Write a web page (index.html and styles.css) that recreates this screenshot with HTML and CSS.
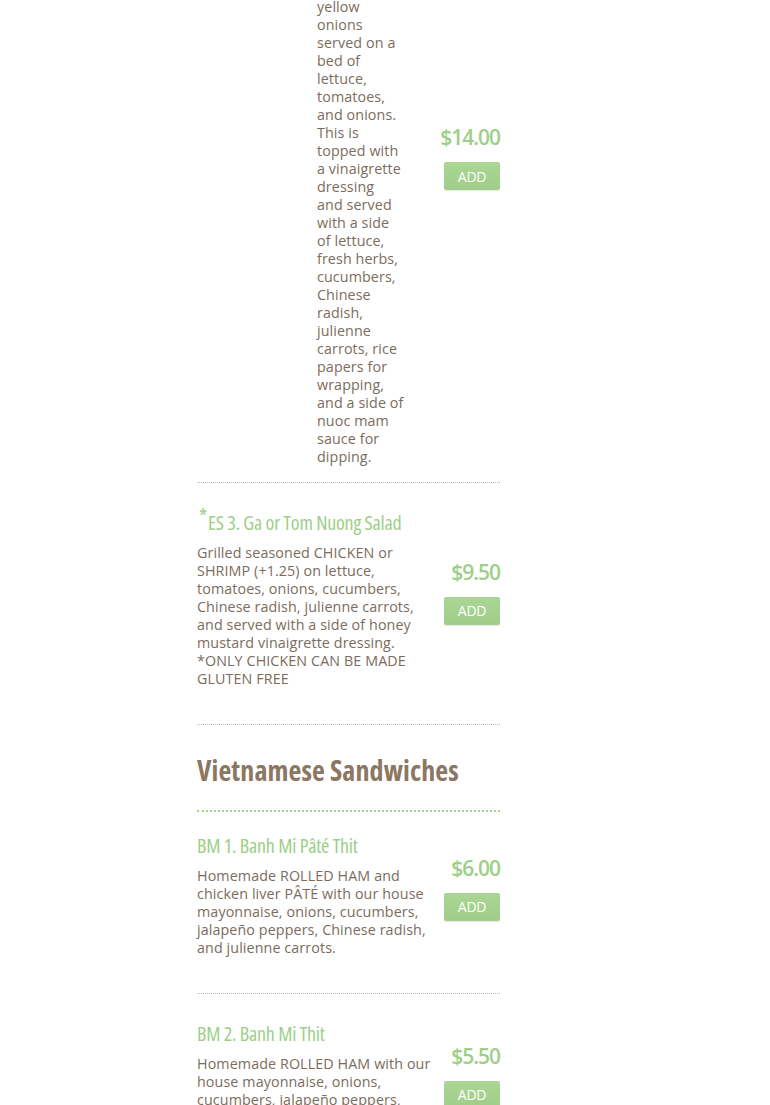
FILE: index.html
```html
<!DOCTYPE html>
<html lang="en">
<head>
<meta charset="utf-8">
<title>Menu</title>
<link rel="stylesheet" href="styles.css">
</head>
<body>
<div class="menu">
  <div class="item item--first">
    <div class="photo"></div>
    <p class="desc desc--narrow">yellow onions served on a bed of lettuce, tomatoes, and onions. This is topped with a vinaigrette dressing<br>and served with a side of lettuce, fresh herbs, cucumbers, Chinese radish, julienne carrots, rice papers for wrapping, and a side of nuoc mam sauce for dipping.</p>
    <div class="side">
      <div class="price">$14.00</div>
      <button class="add">ADD</button>
    </div>
  </div>

  <div class="item item--tail">
    <div class="content">
      <h3 class="title"><span class="star">*</span>ES 3. Ga or Tom Nuong Salad</h3>
      <p class="desc">Grilled seasoned CHICKEN or SHRIMP (+1.25) on lettuce, tomatoes, onions, cucumbers, Chinese radish, julienne carrots, and served with a side of honey mustard vinaigrette dressing. *ONLY CHICKEN CAN BE MADE GLUTEN FREE</p>
    </div>
    <div class="side">
      <div class="price">$9.50</div>
      <button class="add">ADD</button>
    </div>
  </div>

  <h2 class="section">Vietnamese Sandwiches</h2>

  <div class="item item--tail">
    <div class="content">
      <h3 class="title">BM 1. Banh Mi Pâté Thit</h3>
      <p class="desc">Homemade ROLLED HAM and chicken liver PÂTÉ with our house mayonnaise, onions, cucumbers, jalapeño peppers, Chinese radish, and julienne carrots.</p>
    </div>
    <div class="side">
      <div class="price">$6.00</div>
      <button class="add">ADD</button>
    </div>
  </div>

  <div class="item item--tail">
    <div class="content">
      <h3 class="title">BM 2. Banh Mi Thit</h3>
      <p class="desc">Homemade ROLLED HAM with our house mayonnaise, onions, cucumbers, jalapeño peppers, Chinese radish, and julienne carrots.</p>
    </div>
    <div class="side">
      <div class="price">$5.50</div>
      <button class="add">ADD</button>
    </div>
  </div>
</div>
</body>
</html>
```

FILE: styles.css
```css
html, body {
  margin: 0;
  padding: 0;
  background: #fff;
}

body {
  font-family: "Open Sans", "Liberation Sans", sans-serif;
  font-size: 14.3px;
  line-height: 18px;
  letter-spacing: 0.1px;
  color: #7b6c5d;
  overflow: hidden;
}

.menu {
  width: 303px;
  margin: -2px 0 0 197px;
}

.item {
  display: flex;
  align-items: center;
  gap: 4px;
  padding: 25px 0 36px;
  border-bottom: 1px dotted #b9b9b9;
}

.item--first {
  align-items: flex-start;
  gap: 0;
  padding: 0 0 16px;
}

.photo {
  width: 120px;
  flex: none;
}

.content {
  flex: 1;
  min-width: 0;
}

.title {
  margin: 0 0 6px;
  font-family: "Open Sans", "Liberation Sans Narrow", sans-serif;
  font-stretch: 75%;
  font-weight: 400;
  font-size: 20px;
  line-height: 30px;
  color: #9ccf88;
  letter-spacing: -0.2px;
}

.star {
  display: inline-block;
  font-size: 21px;
  line-height: 14px;
  vertical-align: 6px;
  margin: 0 1px 0 2px;
}

.desc {
  margin: 0;
}

.desc--narrow {
  width: 88px;
  flex: none;
}

.side {
  width: 60px;
  flex: none;
  margin-left: auto;
  display: flex;
  flex-direction: column;
  align-items: flex-end;
  padding-bottom: 15px;
}

.item--first .side {
  padding-top: 124px;
  padding-bottom: 0;
}

.price {
  font-size: 21px;
  line-height: 30px;
  color: #9ccf88;
  letter-spacing: -1px;
  font-weight: 600;
}

.add {
  margin-top: 10px;
  width: 56px;
  height: 28px;
  border: 0;
  border-radius: 2px;
  background: linear-gradient(#abd695, #a0cd89);
  color: #fff;
  font-family: "Open Sans", sans-serif;
  font-size: 14px;
  letter-spacing: -0.3px;
  padding: 0;
  box-shadow: 0 1px 1px rgba(0,0,0,0.1);
}

.section {
  margin: 0;
  padding: 27px 0 22px;
  font-family: "Open Sans", "Liberation Sans Narrow", sans-serif;
  font-stretch: 75%;
  font-weight: 700;
  font-size: 28px;
  line-height: 36px;
  color: #8c7762;
  border-bottom: 2px dotted #a6d28f;
}

.section + .item {
  padding-top: 19px;
}
```
